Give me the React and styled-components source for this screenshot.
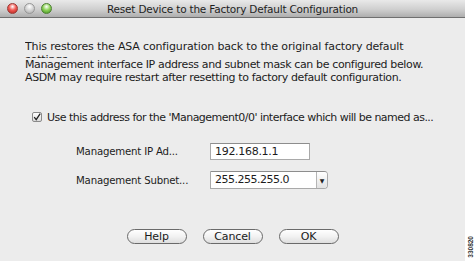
import React from 'react';
import styled, { createGlobalStyle } from 'styled-components';

const GlobalStyle = createGlobalStyle`
  html, body {
    margin: 0;
    padding: 0;
    background: #ffffff;
  }
  body {
    font-family: "DejaVu Sans", "Liberation Sans", sans-serif;
  }
`;

const Page = styled.div`
  width: 475px;
  height: 261px;
  display: flex;
  overflow: hidden;
`;

const Window = styled.div`
  width: 465px;
  height: 261px;
  display: flex;
  flex-direction: column;
  background: #ececec;
`;

const TitleBar = styled.div`
  height: 17px;
  flex: none;
  display: flex;
  align-items: center;
  padding-left: 7px;
  background: linear-gradient(#e9e9e9, #cfcfcf 55%, #aeaeae);
  border-bottom: 1px solid #6f6f6f;
`;

const Lights = styled.div`
  display: flex;
  gap: 6px;
`;

const Light = styled.span`
  width: 11px;
  height: 11px;
  border-radius: 50%;
  box-sizing: border-box;
  border: 1px solid ${p => p.$edge};
  background: radial-gradient(circle at 50% 30%, #ffffff 0, ${p => p.$color} 45%, ${p => p.$dark} 100%);
`;

const Title = styled.div`
  flex: 1;
  text-align: center;
  margin-right: 52px;
  font-size: 10.5px;
  color: #1e1e1e;
  letter-spacing: -0.2px;
`;

const Content = styled.div`
  flex: 1;
  display: flex;
  flex-direction: column;
  padding: 22px 0 0 25px;
  font-size: 11px;
  color: #1c1c1c;
  letter-spacing: -0.15px;
`;

const Intro = styled.div`
  line-height: 13px;
  height: 18px;
  overflow: hidden;
  width: 400px;
`;

const Note = styled.div`
  line-height: 13px;
  letter-spacing: -0.37px;
`;

const CheckRow = styled.label`
  display: flex;
  align-items: center;
  gap: 5px;
  margin: 27px 0 0 7px;
  height: 12px;
  letter-spacing: -0.52px;
`;

const Box = styled.span`
  width: 10px;
  height: 10px;
  box-sizing: border-box;
  border: 1px solid #8a8a8a;
  border-radius: 2px;
  background: linear-gradient(#ffffff, #dcdcdc);
  display: flex;
  align-items: center;
  justify-content: center;
`;

const FormRow = styled.div`
  display: flex;
  align-items: center;
  margin-left: 51px;
  margin-top: ${p => p.$top}px;
`;

const Label = styled.div`
  width: 134px;
  font-size: 10.2px;
  letter-spacing: -0.2px;
`;

const TextField = styled.div`
  width: 100px;
  height: 17px;
  box-sizing: border-box;
  border: 1px solid #a9a9a9;
  border-top-color: #8d8d8d;
  background: #ffffff;
  padding-left: 4px;
  line-height: 15px;
  letter-spacing: -0.3px;
`;

const Combo = styled.div`
  width: 118px;
  height: 18px;
  box-sizing: border-box;
  display: flex;
  border: 1px solid #a9a9a9;
  border-top-color: #8d8d8d;
  border-radius: 0 4px 4px 0;
  background: #ffffff;
`;

const ComboText = styled.div`
  flex: 1;
  padding-left: 4px;
  line-height: 16px;
  letter-spacing: -0.5px;
`;

const ComboArrow = styled.div`
  width: 10px;
  border-left: 1px solid #b5b5b5;
  border-radius: 0 3px 3px 0;
  background: linear-gradient(#ffffff, #e2e2e2);
  display: flex;
  align-items: center;
  justify-content: center;
  font-size: 6px;
  color: #222;
`;

const Buttons = styled.div`
  display: flex;
  justify-content: center;
  gap: 16px;
  margin: 40px 0 0 -25px;
`;

const Button = styled.div`
  width: 60px;
  height: 15px;
  box-sizing: border-box;
  border: 1px solid #6a6a6a;
  border-radius: 8px;
  background: linear-gradient(#ffffff, #f2f2f2 50%, #dedede);
  display: flex;
  align-items: center;
  justify-content: center;
  font-size: 11px;
  color: #1a1a1a;
`;

const Strip = styled.div`
  width: 10px;
  display: flex;
  flex-direction: column;
  justify-content: flex-end;
  align-items: center;
  padding-bottom: 3px;
  box-sizing: border-box;
`;

const FigureId = styled.span`
  writing-mode: vertical-rl;
  transform: rotate(180deg);
  font-family: "Liberation Sans", sans-serif;
  font-size: 6.5px;
  font-weight: bold;
  color: #333;
`;

export default function App() {
  return (
    <Page>
      <GlobalStyle />
      <Window>
        <TitleBar>
          <Lights>
            <Light $color="#f25b55" $dark="#b1211b" $edge="#9a3a36" />
            <Light $color="#d7d7d7" $dark="#a9a9a9" $edge="#979797" />
            <Light $color="#8fd35a" $dark="#3e8e1d" $edge="#4d7f33" />
          </Lights>
          <Title>Reset Device to the Factory Default Configuration</Title>
        </TitleBar>
        <Content>
          <Intro>This restores the ASA configuration back to the original factory default settings.</Intro>
          <Note>
            Management interface IP address and subnet mask can be configured below.<br />
            ASDM may require restart after resetting to factory default configuration.
          </Note>
          <CheckRow>
            <Box>
              <svg width="8" height="8" viewBox="0 0 8 8">
                <path d="M1.2 4.2 L3.2 6.6 L7.2 0.6" fill="none" stroke="#222" strokeWidth="1.3" />
              </svg>
            </Box>
            Use this address for the 'Management0/0' interface which will be named as...
          </CheckRow>
          <FormRow $top={20}>
            <Label>Management IP Ad...</Label>
            <TextField>192.168.1.1</TextField>
          </FormRow>
          <FormRow $top={11}>
            <Label>Management Subnet...</Label>
            <Combo>
              <ComboText>255.255.255.0</ComboText>
              <ComboArrow>▼</ComboArrow>
            </Combo>
          </FormRow>
          <Buttons>
            <Button>Help</Button>
            <Button>Cancel</Button>
            <Button>OK</Button>
          </Buttons>
        </Content>
      </Window>
      <Strip>
        <FigureId>330820</FigureId>
      </Strip>
    </Page>
  );
}
